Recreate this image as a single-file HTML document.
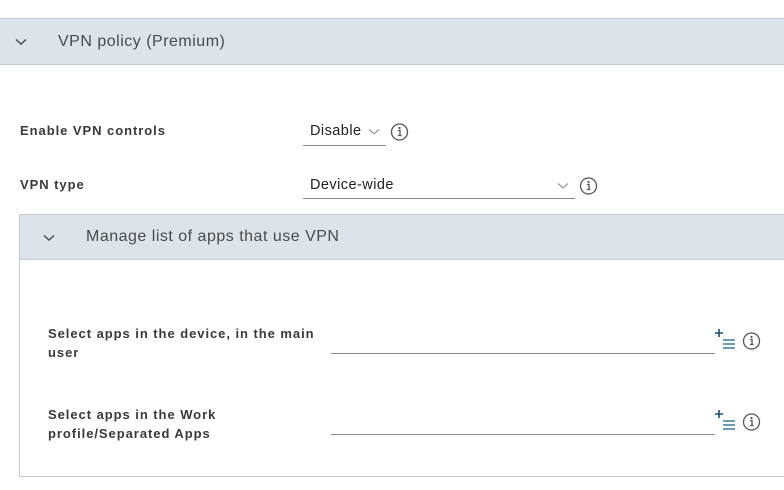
<!DOCTYPE html>
<html><head><style>
body{margin:0;width:784px;height:490px;background:#fff;position:relative;overflow:hidden;font-family:"Liberation Sans",sans-serif;color:#333}
.a{position:absolute}
.lbl{font-size:13px;font-weight:bold;color:#3a3a3a;line-height:19px;letter-spacing:0.95px}
.hd{font-size:16px;color:#4a4a4a;letter-spacing:0.5px}
.val{font-size:14.5px;color:#222;letter-spacing:0.45px}
</style></head><body>
<div class="a" style="left:0;top:18px;width:784px;height:1px;background:#c8c8c8"></div>
<div class="a" style="left:0;top:19px;width:784px;height:45px;background:#dbe4ea;border-bottom:1px solid #c3ccd3"></div>
<svg class="a" style="left:15px;top:38px" width="12" height="8"><path d="M1 1.5 L6 6 L11 1.5" fill="none" stroke="#4a4a4a" stroke-width="1.5"/></svg>
<div class="a hd" style="left:58px;top:33px">VPN policy (Premium)</div>

<div class="a lbl" style="left:20px;top:121px">Enable VPN controls</div>
<div class="a val" style="left:310px;top:123px">Disable</div>
<svg class="a" style="left:368px;top:128px" width="12" height="8"><path d="M1 1.5 L6 6 L11 1.5" fill="none" stroke="#999" stroke-width="1.2"/></svg>
<div class="a" style="left:303px;top:145px;width:83px;height:1px;background:#888"></div>
<svg class="a" style="left:390px;top:122px" width="20" height="20"><circle cx="9.5" cy="10" r="8" fill="none" stroke="#555" stroke-width="1.3"/><circle cx="9.5" cy="6" r="1.1" fill="#555"/><path d="M8 8.5h2v5M8 13.5h3.5" fill="none" stroke="#555" stroke-width="1.3"/></svg>

<div class="a lbl" style="left:20px;top:175px">VPN type</div>
<div class="a val" style="left:310px;top:177px">Device-wide</div>
<svg class="a" style="left:557px;top:182px" width="12" height="8"><path d="M1 1.5 L6 6 L11 1.5" fill="none" stroke="#999" stroke-width="1.2"/></svg>
<div class="a" style="left:303px;top:198px;width:272px;height:1px;background:#888"></div>
<svg class="a" style="left:579px;top:176px" width="20" height="20"><circle cx="9.5" cy="10" r="8" fill="none" stroke="#555" stroke-width="1.3"/><circle cx="9.5" cy="6" r="1.1" fill="#555"/><path d="M8 8.5h2v5M8 13.5h3.5" fill="none" stroke="#555" stroke-width="1.3"/></svg>

<div class="a" style="left:19px;top:214px;width:770px;height:261px;border:1px solid #c8c8c8"></div>
<div class="a" style="left:20px;top:215px;width:764px;height:44px;background:#dbe4ea;border-bottom:1px solid #c3ccd3"></div>
<svg class="a" style="left:43px;top:234px" width="12" height="8"><path d="M1 1.5 L6 6 L11 1.5" fill="none" stroke="#4a4a4a" stroke-width="1.5"/></svg>
<div class="a hd" style="left:86px;top:228px">Manage list of apps that use VPN</div>

<div class="a lbl" style="left:48px;top:324px;width:280px">Select apps in the device, in the main<br>user</div>
<div class="a" style="left:331px;top:353px;width:384px;height:1px;background:#888"></div>
<svg class="a" style="left:714px;top:329px" width="24" height="22"><path d="M1 4h8M5 0v8" stroke="#1f4e6e" stroke-width="1.6"/><path d="M9 11h12M9 15h12M9 19h12" stroke="#3a7ba3" stroke-width="1.6"/></svg>
<svg class="a" style="left:742px;top:331px" width="20" height="20"><circle cx="9.5" cy="10" r="8" fill="none" stroke="#555" stroke-width="1.3"/><circle cx="9.5" cy="6" r="1.1" fill="#555"/><path d="M8 8.5h2v5M8 13.5h3.5" fill="none" stroke="#555" stroke-width="1.3"/></svg>

<div class="a lbl" style="left:48px;top:405px;width:280px">Select apps in the Work<br>profile/Separated Apps</div>
<div class="a" style="left:331px;top:434px;width:384px;height:1px;background:#888"></div>
<svg class="a" style="left:714px;top:410px" width="24" height="22"><path d="M1 4h8M5 0v8" stroke="#1f4e6e" stroke-width="1.6"/><path d="M9 11h12M9 15h12M9 19h12" stroke="#3a7ba3" stroke-width="1.6"/></svg>
<svg class="a" style="left:742px;top:412px" width="20" height="20"><circle cx="9.5" cy="10" r="8" fill="none" stroke="#555" stroke-width="1.3"/><circle cx="9.5" cy="6" r="1.1" fill="#555"/><path d="M8 8.5h2v5M8 13.5h3.5" fill="none" stroke="#555" stroke-width="1.3"/></svg>
</body></html>
